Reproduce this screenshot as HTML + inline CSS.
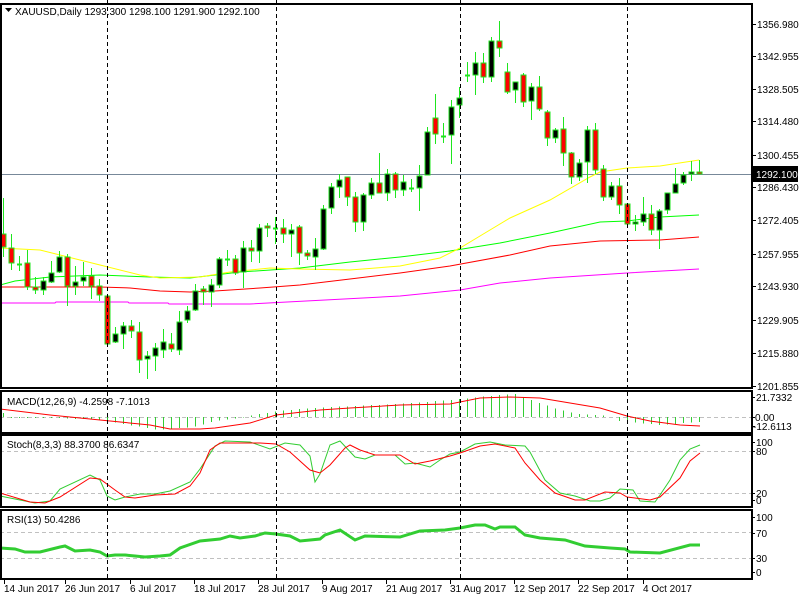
<!DOCTYPE html>
<html><head><meta charset="utf-8"><style>
html,body{margin:0;padding:0;background:#fff;width:800px;height:600px;overflow:hidden}
svg{display:block;font-family:"Liberation Sans",sans-serif;font-size:10px}
</style></head><body>
<svg id="s" width="800" height="600" xmlns="http://www.w3.org/2000/svg">
<rect width="800" height="600" fill="#fff"/>
<g id="g"></g>
<g fill="#000">
<text x="15" y="15">XAUUSD,Daily  1293.300 1298.100 1291.900 1292.100</text>
<text x="7" y="405">MACD(12,26,9) -4.2598 -7.1013</text>
<text x="7" y="448">Stoch(8,3,3) 88.3700 86.6347</text>
<text x="7" y="523">RSI(13) 50.4286</text>
<g>
<text x="757" y="28">1356.980</text>
<text x="757" y="60">1342.955</text>
<text x="757" y="93">1328.505</text>
<text x="757" y="125">1314.480</text>
<text x="757" y="159">1300.455</text>
<text x="757" y="191">1286.430</text>
<text x="757" y="224">1272.405</text>
<text x="757" y="258">1257.955</text>
<text x="757" y="290">1243.930</text>
<text x="757" y="324">1229.905</text>
<text x="757" y="357">1215.880</text>
<text x="757" y="390">1201.855</text>
<text x="756" y="401">21.7332</text>
<text x="755" y="421">0.00</text>
<text x="753" y="430">-12.6113</text>
<text x="756" y="446">100</text>
<text x="756" y="455">80</text>
<text x="756" y="497">20</text>
<text x="756" y="504">0</text>
<text x="756" y="521">100</text>
<text x="756" y="537">70</text>
<text x="756" y="562">30</text>
<text x="756" y="576">0</text>
<text x="4" y="592">14 Jun 2017</text>
<text x="65" y="592">26 Jun 2017</text>
<text x="130" y="592">6 Jul 2017</text>
<text x="194" y="592">18 Jul 2017</text>
<text x="258" y="592">28 Jul 2017</text>
<text x="322" y="592">9 Aug 2017</text>
<text x="386" y="592">21 Aug 2017</text>
<text x="450" y="592">31 Aug 2017</text>
<text x="514" y="592">12 Sep 2017</text>
<text x="578" y="592">22 Sep 2017</text>
<text x="643" y="592">4 Oct 2017</text>
</g>
</g>
<rect x="752" y="166" width="46" height="16" fill="#000"/>
<text x="756" y="178" fill="#fff">1292.100</text>
<path d="M5 8h7l-3.5 4z" fill="#000"/>
</svg>
<script>
var g=document.getElementById('g'),h='';
function L(a,b,c,d,col,w,da){h+='<line x1="'+a+'" y1="'+b+'" x2="'+c+'" y2="'+d+'" stroke="'+col+'" stroke-width="'+(w||1)+'"'+(da?' stroke-dasharray="'+da+'"':'')+' shape-rendering="crispEdges"/>';}
function P(pts,col,w){var s='';for(var i=0;i<pts.length;i+=2)s+=(i?' ':'')+pts[i]+','+pts[i+1];h+='<polyline points="'+s+'" fill="none" stroke="'+col+'" stroke-width="'+(w||1)+'"/>';}
function interp(pts,x){for(var i=0;i<pts.length-2;i+=2){if(x<=pts[i+2]){var t=(x-pts[i])/(pts[i+2]-pts[i]);return pts[i+1]+t*(pts[i+3]-pts[i+1]);}}return pts[pts.length-1];}
L(0,417.5,752,417.5,'#c0c0c0',1,'4,3');
L(0,451.5,752,451.5,'#c0c0c0',1,'4,3');L(0,493.5,752,493.5,'#c0c0c0',1,'4,3');
L(0,532.5,752,532.5,'#c0c0c0',1,'4,3');L(0,558.5,752,558.5,'#c0c0c0',1,'4,3');
L(0,174.5,752,174.5,'#778899');
P([0,303,55,303,56,302,128,302,129,303,168,303,169,304,250,304,400,296,460,290,500,283,550,278,627,273,699,269],'#ff00ff');
P([0,287,100,287,130,288,160,291,190,292,215,291,260,288,300,285,350,279,400,273,450,266,510,255,550,246,600,241,660,240,699,237],'#ff0000');
P([0,285,15,281,50,277,100,275,150,277,190,278,240,272,300,268,350,262,400,257,450,251,500,243,550,233,600,222,627,221,660,217,699,215],'#00ff00');
P([0,248,40,250,100,265,140,275,160,278,200,277,230,272,270,268,300,269,350,270,400,266,440,258,460,248,480,236,510,218,550,200,590,177,600,172,627,168,660,166,699,160],'#ffff00');
var C=[[234,247,198,257],[248,263,234,270],[264,264,256,271],[263,287,250,290],[287,290,277,294],[290,281,277,295],[282,273,261,283],[272,257,251,273],[257,286,254,306],[286,282,266,295],[281,277,262,286],[276,286,268,299],[286,295,279,301],[296,344,296,344],[342,334,327,343],[334,326,322,349],[326,331,320,338],[332,360,322,373],[359,356,351,379],[356,348,343,371],[350,342,329,358],[344,349,333,352],[350,322,311,355],[320,311,306,323],[310,291,284,311],[289,292,286,305],[292,285,279,307],[285,259,257,288],[259,259,250,266],[259,273,255,275],[272,248,241,288],[248,251,240,262],[251,228,224,263],[226,228,223,237],[228,228,217,244],[228,234,219,243],[234,230,224,257],[227,253,225,265],[253,256,250,260],[257,249,238,270],[249,209,205,250],[208,187,183,214],[187,180,174,198],[177,197,177,206],[197,222,192,232],[222,195,193,231],[195,183,178,199],[183,193,153,193],[193,174,169,201],[174,190,172,198],[190,182,175,196],[188,188,179,192],[188,176,165,211],[175,132,127,175],[118,134,94,144],[136,136,123,143],[135,107,100,164],[105,98,87,118],[75,75,62,82],[75,63,52,95],[63,77,53,83],[77,41,37,82],[41,48,21,57],[72,92,63,94],[90,82,82,103],[75,102,73,107],[101,87,83,120],[87,109,76,111],[112,138,110,146],[138,130,128,143],[129,153,117,166],[153,177,152,184],[177,163,159,181],[162,130,126,183],[130,170,123,174],[169,197,165,201],[197,186,182,200],[186,205,178,214],[204,224,204,228],[224,222,215,231],[222,214,197,226],[214,230,205,235],[230,211,209,249],[210,193,193,214],[193,184,168,193],[183,175,172,185],[174,172,161,181],[172,174,160,174]];
for(var i=0;i<C.length;i++){var x=3+i*8,c=C[i],o=c[0],cl=c[1];
 h+='<line x1="'+(x+.5)+'" y1="'+c[2]+'" x2="'+(x+.5)+'" y2="'+c[3]+'" stroke="#1ee61e" stroke-width="1"/>';
 var t=Math.min(o,cl),b=Math.max(o,cl);
 if(b-t<1){h+='<line x1="'+(x-2)+'" y1="'+(t+.5)+'" x2="'+(x+3)+'" y2="'+(t+.5)+'" stroke="#1ee61e" stroke-width="2"/>';}
 else h+='<rect x="'+(x-2)+'" y="'+t+'" width="5" height="'+(b-t)+'" fill="'+(cl>o?'#ff0000':'#000')+'" stroke="#1ee61e" stroke-width="1"/>';}
var M=[0,411,11,418,60,418,100,420,130,425,160,430,180,428,200,426,210,422,240,418,260,414,280,411,300,409,330,407,400,404,450,400,480,397,500,395,515,394,540,403,560,410,580,414,610,416,620,421,640,423,660,425,700,422];
for(var i=0;i<88;i++){var x=3.5+i*8,y=interp(M,x);L(x,417,x,y,'#32cd32');}
P([0,409,50,415,100,420,150,425,170,429,200,429,215,428,250,423,276,415,320,410,350,408,400,405,450,404,480,398,510,397,540,398,570,403,600,408,627,416,650,421,680,425,700,426],'#ff0000');
P([0,496,20,500,35,503,50,501,60,489,90,475,100,480,107,496,115,500,125,497,140,494,155,494,170,491,190,482,200,469,215,446,225,441,250,442,270,449,285,443,300,445,310,456,315,482,320,474,330,445,340,441,355,457,365,459,375,455,395,455,405,464,415,463,430,467,440,460,450,454,460,452,475,444,490,442,505,445,525,446,530,452,545,480,560,493,575,496,590,501,600,501,610,498,620,489,633,490,640,501,655,502,660,495,670,480,680,460,690,449,700,445],'#32cd32');
P([0,493,30,502,45,503,60,497,90,478,100,479,115,490,125,497,135,498,155,495,175,494,190,486,200,473,210,450,220,443,260,443,276,444,290,452,310,470,320,473,330,465,345,448,350,445,360,450,375,455,400,455,415,464,430,461,450,456,460,453,480,446,495,444,515,448,525,463,540,480,555,493,575,500,585,500,605,492,620,493,627,497,650,500,660,497,680,478,690,461,700,453],'#ff0000');
P([0,548,15,549,25,552,40,552,60,547,65,546,75,551,90,550,100,552,107,556,115,555,125,555,135,556,145,557,160,556,170,555,180,548,200,541,220,539,230,536,240,538,255,536,265,533,276,534,290,536,300,541,320,539,325,535,340,530,355,540,365,536,400,537,420,531,445,530,460,528,475,525,485,525,495,529,500,527,515,527,525,535,540,538,565,540,585,546,610,548,625,549,630,552,660,553,690,545,700,545],'#32cd32',3);
[107,276,460,627].forEach(function(x){L(x+.5,0,x+.5,580,'#000',1,'4,3');});
function R(x,y,w,hh){h+='<rect x="'+x+'" y="'+y+'" width="'+w+'" height="'+hh+'" fill="none" stroke="#000" stroke-width="2"/>';}
R(1,4,751,384);R(1,391,751,42);R(1,435,751,72);R(1,510,751,69);
[24,56,89,121,155,187,220,254,286,320,353,386].forEach(function(y){L(752,y+.5,756,y+.5,'#000');});
[397,417,426,442,451,493,500,517,533,558,572].forEach(function(y){L(752,y+.5,755,y+.5,'#000');});
[4,65,130,194,258,322,386,450,514,578,643].forEach(function(x){L(x+.5,579,x+.5,584,'#000');});
g.innerHTML=h;
</script>
</body></html>
